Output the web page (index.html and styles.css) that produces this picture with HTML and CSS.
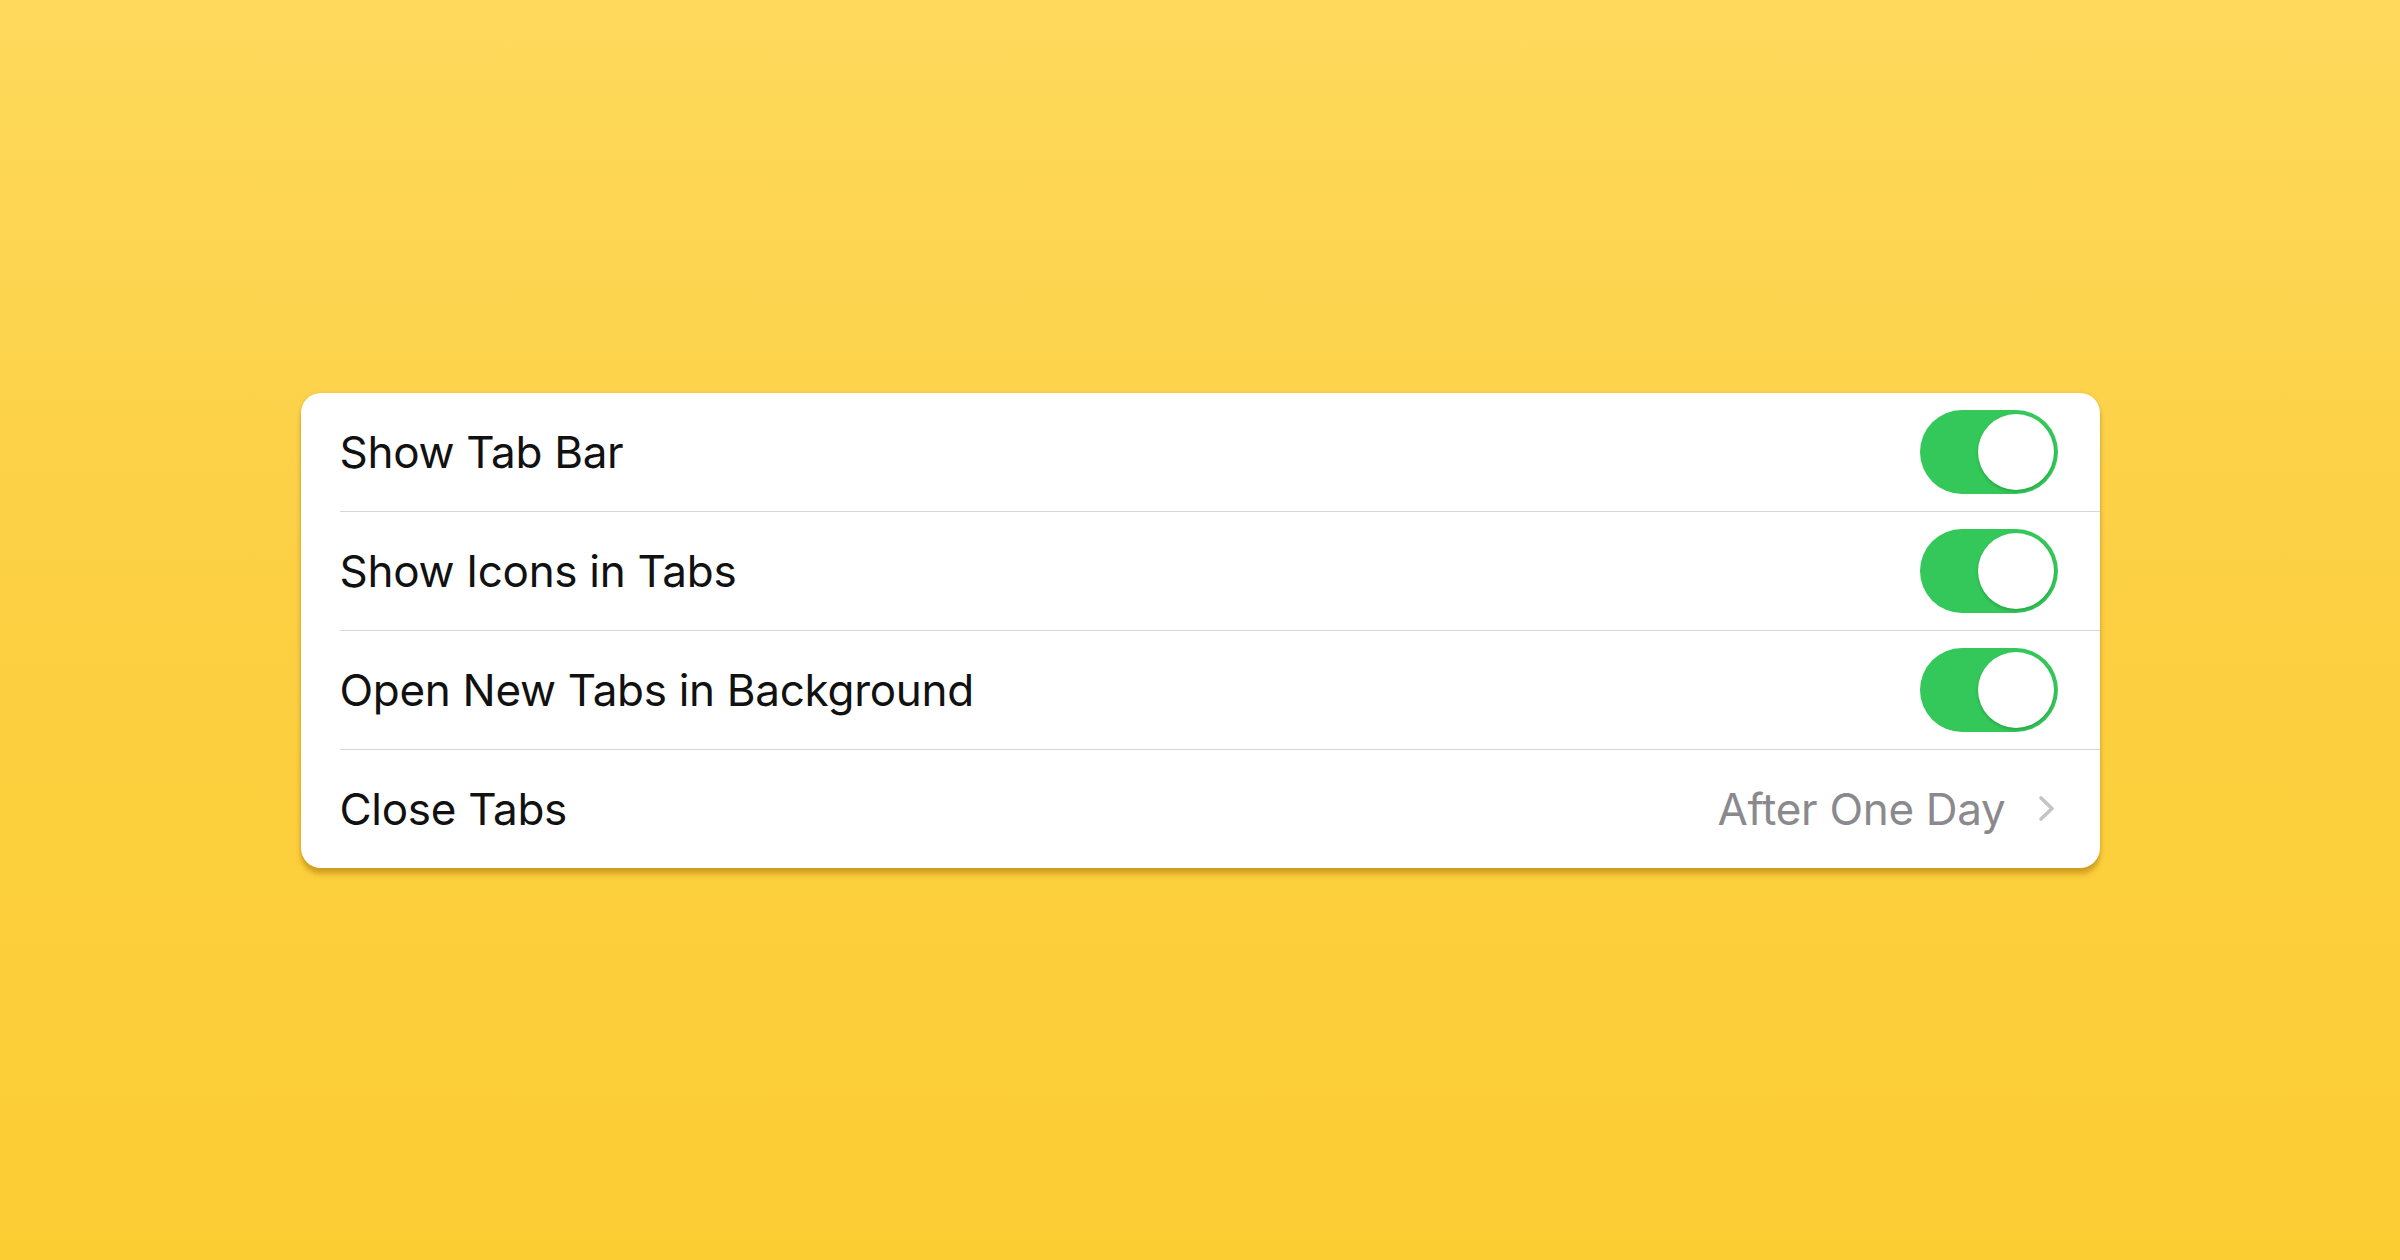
FILE: index.html
```html
<!DOCTYPE html>
<html>
<head>
<meta charset="utf-8">
<link rel="stylesheet" href="styles.css">
</head>
<body>
<div class="card">
  <div class="row">
    <div class="row-inner">
      <span class="label">Show Tab Bar</span>
      <div class="toggle"><div class="knob"></div></div>
    </div>
  </div>
  <div class="row">
    <div class="row-inner sep">
      <span class="label">Show Icons in Tabs</span>
      <div class="toggle"><div class="knob"></div></div>
    </div>
  </div>
  <div class="row">
    <div class="row-inner sep">
      <span class="label">Open New Tabs in Background</span>
      <div class="toggle"><div class="knob"></div></div>
    </div>
  </div>
  <div class="row">
    <div class="row-inner sep">
      <span class="label">Close Tabs</span>
      <div class="detail">
        <span class="value">After One Day</span>
        <svg class="chevron" width="19" height="27" viewBox="0 0 19 27"><path d="M4 3 L15 13.5 L4 24" fill="none" stroke="#c4c4c8" stroke-width="3.6" stroke-linecap="round" stroke-linejoin="round"/></svg>
      </div>
    </div>
  </div>
</div>
</body>
</html>
```
FILE: styles.css
```css
html, body {
  margin: 0;
  padding: 0;
}
body {
  width: 2400px;
  height: 1260px;
  background: linear-gradient(180deg, #fed95c 0%, #fcd043 45%, #fccd33 100%);
  display: flex;
  align-items: center;
  justify-content: center;
  font-family: "Inter", "Roboto", "Liberation Sans", sans-serif;
}
.card {
  width: 1799px;
  background: #ffffff;
  border-radius: 20px;
  box-shadow: 0 6px 5px rgba(160, 105, 0, 0.45), 0 0 3px rgba(120, 90, 0, 0.15);
  overflow: hidden;
}
.row {
  padding-left: 39px;
}
.row-inner {
  display: flex;
  align-items: center;
  justify-content: space-between;
  height: 118px;
  padding-right: 42px;
}
.row-inner.sep {
  border-top: 1px solid #d6d6d9;
}
.label {
  font-size: 44px;
  color: #111111;
  letter-spacing: -0.3px;
}
.toggle {
  width: 138px;
  height: 84px;
  box-sizing: border-box;
  border-radius: 42px;
  background: #34c759;
  display: flex;
  align-items: center;
  justify-content: flex-end;
  padding: 4px;
}
.knob {
  width: 76px;
  height: 76px;
  border-radius: 50%;
  background: #ffffff;
  box-shadow: 0 2px 3px rgba(0, 80, 20, 0.25);
}
.detail {
  display: flex;
  align-items: center;
  gap: 31px;
}
.value {
  font-size: 44px;
  color: #8a8a8e;
  letter-spacing: -0.3px;
}
.chevron {
  display: block;
  margin-right: 2px;
}
```
